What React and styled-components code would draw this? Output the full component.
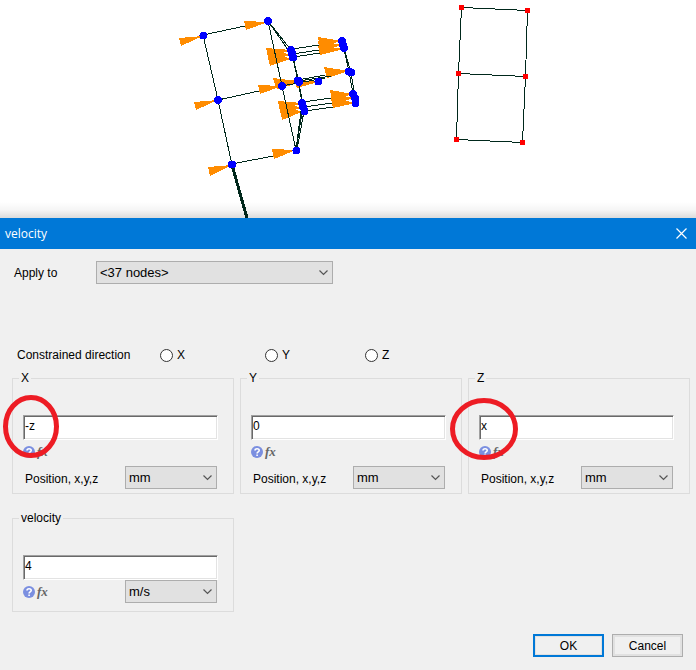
import React from "react";
import styled, { createGlobalStyle } from "styled-components";

const GlobalStyle = createGlobalStyle`
  * { box-sizing: border-box; }
  body {
    margin: 0;
    background: #f0f0f0;
    color: #000;
    font: 12px/14px "Liberation Sans", Arial, sans-serif;
  }
  input, select, button { font: inherit; color: inherit; }
`;

const Viewport = styled.section`
  position: relative;
  height: 218px;
  overflow: hidden;
  background: #fff;
  &::after {
    content: "";
    position: absolute;
    inset: auto 0 0;
    height: 16px;
    background: linear-gradient(rgba(0, 0, 0, 0), rgba(0, 0, 0, 0.04) 50%, rgba(0, 0, 0, 0.14));
  }
`;

const Scene = styled.svg`
  display: block;
  width: 100%;
  height: 100%;
`;

const TitleBar = styled.header`
  display: flex;
  align-items: center;
  justify-content: space-between;
  height: 31px;
  padding: 0 5px;
  background: #0078d7;
  color: #fff;
`;

const Title = styled.h1`
  margin: 0;
  font: 12px/16px "Open Sans", "Noto Sans", sans-serif;
`;

const CloseButton = styled.button`
  display: grid;
  place-items: center;
  width: 20px;
  height: 20px;
  padding: 0;
  border: 0;
  background: none;
`;

const Form = styled.form`
  padding: 12px 6px 13px 12px;
`;

const ApplyRow = styled.div`
  display: grid;
  grid-template-columns: 82px minmax(0, 237px);
  align-items: center;
  padding-left: 2px;
`;

const DirectionRow = styled.div`
  display: grid;
  grid-template-columns: 143px 105px 100px auto;
  align-items: center;
  height: 20px;
  margin: 61px 0 6px;
  padding-left: 5px;
`;

const RadioLabel = styled.label`
  display: flex;
  align-items: center;
  gap: 4px;
`;

const Radio = styled.input`
  appearance: none;
  width: 13px;
  height: 13px;
  margin: 0;
  border: 1px solid #333;
  border-radius: 50%;
  background: #fff;
  &:checked { box-shadow: inset 0 0 0 3px #fff; background: #333; }
`;

const Columns = styled.div`
  display: grid;
  grid-template-columns: repeat(3, minmax(0, 1fr));
  gap: 17px 6px;
`;

const Group = styled.fieldset`
  min-width: 0;
  margin: 0;
  padding: 0 15px ${(p) => (p.$compact ? 8 : 4)}px 10px;
  border: 1px solid #dcdcdc;
`;

const Legend = styled.legend`
  margin-left: -4px;
  padding: 0 2px;
`;

const Field = styled.div`
  position: relative;
  margin-top: 30px;
`;

const TextBox = styled.input`
  display: block;
  width: 100%;
  height: 25px;
  padding: 0 1px 3px;
  border: 1px solid;
  border-color: #a0a0a0 #fff #fff #a0a0a0;
  border-radius: 0;
  outline: 0;
  background: #fff;
  box-shadow: inset 1px 1px #696969, inset -1px -1px #e3e3e3;
`;

const Mark = styled.svg`
  position: absolute;
  z-index: 1;
  overflow: visible;
  pointer-events: none;
  left: ${(p) => p.$left}px;
  top: ${(p) => p.$top}px;
`;

const HelperRow = styled.div`
  display: flex;
  align-items: center;
  height: 24px;
  margin-bottom: 2px;
`;

const UnitRow = styled.div`
  display: grid;
  grid-template-columns: minmax(0, 1fr) 92px;
  align-items: center;
  padding-right: 1px;
`;

const UnitLabel = styled.label`
  padding: 2px 0 0 2px;
`;

const Helpers = styled.div`
  display: flex;
  align-items: center;
  gap: 2px;
`;

const IconButton = styled.button`
  display: block;
  padding: 0;
  border: 0;
  background: none;
`;

const FxButton = styled(IconButton)`
  color: #666;
  font: italic bold 13px/14px "Liberation Serif", "Times New Roman", serif;
`;

const SelectBox = styled.div`
  position: relative;
`;

const NativeSelect = styled.select`
  display: block;
  appearance: none;
  width: 100%;
  height: 23px;
  padding: 0 20px 0 3px;
  border: 1px solid #adadad;
  border-radius: 0;
  background: #e1e1e1;
  font-size: 13px;
`;

const Chevron = styled.svg`
  position: absolute;
  right: 5px;
  top: 9px;
  pointer-events: none;
`;

const Actions = styled.footer`
  display: flex;
  justify-content: flex-end;
  gap: 8px;
  margin-top: 22px;
  padding-right: 7px;
`;

const PushButton = styled.button`
  width: 71px;
  height: 23px;
  padding: 0;
  border: ${(p) => (p.$primary ? "2px solid #0078d7" : "1px solid #adadad")};
  background: #f0f0f0;
  box-shadow: inset 0 0 0 ${(p) => (p.$primary ? 1 : 2)}px #e1e1e1;
`;

function Select({ id, value, label }) {
  return (
    <SelectBox>
      <NativeSelect id={id} aria-label={label} defaultValue={value}>
        <option>{value}</option>
      </NativeSelect>
      <Chevron width="9" height="6" viewBox="0 0 9 6" fill="none" stroke="#555" strokeWidth="1.2">
        <path d="M.5 .5 4.5 4.5 8.5 .5" />
      </Chevron>
    </SelectBox>
  );
}

function HelpTools() {
  return (
    <Helpers>
      <IconButton type="button" aria-label="Help">
        <svg width="12" height="12" viewBox="0 0 12 12" display="block">
          <circle cx="6" cy="6" r="6" fill="#7b8fe0" />
          <path d="M4 4.6C4 2.2 8.2 2.2 8.2 4.4 8.2 5.9 6.1 5.8 6.1 7.4M6.1 8.4v1.5" fill="none" stroke="#fff" strokeWidth="1.6" />
        </svg>
      </IconButton>
      <FxButton type="button" aria-label="Function">fx</FxButton>
    </Helpers>
  );
}

function Circled({ left, top, width, height }) {
  return (
    <Mark $left={left} $top={top} width={width} height={height} aria-hidden="true">
      <ellipse cx={width / 2} cy={height / 2} rx={width / 2 - 2.5} ry={height / 2 - 2.5} fill="none" stroke="#ed1c24" strokeWidth="5" />
    </Mark>
  );
}

function AxisGroup({ axis, value, mark }) {
  const id = `unit-${axis}`;
  return (
    <Group>
      <Legend>{axis}</Legend>
      <Field>
        <TextBox aria-label={`${axis} component`} defaultValue={value} />
        {mark && <Circled {...mark} />}
      </Field>
      <HelperRow><HelpTools /></HelperRow>
      <UnitRow>
        <UnitLabel htmlFor={id}>Position, x,y,z</UnitLabel>
        <Select id={id} value="mm" />
      </UnitRow>
    </Group>
  );
}

const arrows = [
  "179,38 181,46 203,36", "244,21 246,30 268,22", "194,102 196,110 218,100",
  "258,85 260,94 282,86", "208,167 210,176 232,165", "272,149 274,159 296,150",
  "266,48 269,58 291,50", "267,52 269,62 292,54", "268,56 270,66 293,58",
  "318,37 320,47 342,41", "318,41 320,51 343,45", "318,45 320,55 344,49",
  "324,67 327,78 349,71", "273,78 276,88 298,81", "275,80 277,89 299,83", "294,79 297,88 318,82",
  "278,101 280,111 302,103", "279,105 281,115 303,107", "280,109 282,120 304,111",
  "330,90 332,100 353,94", "331,94 333,104 355,98", "331,98 333,108 356,103",
];

const edges = [
  "M203 35 218 100 232 165", "M268 21 282 86 296 150", "M203 35 245 26", "M218 100 259 91", "M232 164 273 156",
  "M268 21 291 50", "M268 21 293 57",
  "M291 50 298 81 303 107 296 150", "M293 57 299 83 304 111 297 150", "M302 103 296 150",
  "M342 41 349 71 353 94", "M344 48 351 73 356 103",
  "M293 49 319 45", "M293 54 319 50", "M294 57 320 53",
  "M282 86 325 78", "M298 80 325 75", "M299 81 331 76",
  "M303 102 331 98", "M304 107 332 103", "M305 111 333 107",
];

const nodes = [
  [203.5, 35.5], [268, 21], [218, 100], [232, 164.5], [296.5, 150.5], [282, 86], [318.5, 81.5],
  [298, 80.5], [299, 82], [291, 50], [292, 53.5], [293, 57.5], [342, 41], [343, 45], [344, 48],
  [349, 71.5], [351, 72.5], [302, 103], [303, 107], [304.5, 111], [353, 94], [355, 98], [355.5, 103],
];

const corners = [[461, 7], [527, 10], [458, 73], [525, 76], [456, 139], [522, 142]];

function MeshScene() {
  return (
    <Scene role="img" aria-label="Mesh with velocity arrows" shapeRendering="crispEdges">
      <g fill="#ff8c00">{arrows.map((p) => <polygon key={p} points={p} />)}</g>
      <g fill="none" stroke="#00281b">
        {edges.map((d) => <path key={d} d={d} />)}
        <path d="M232 165 247 218" strokeWidth="3" />
        <path d="M461.5 7.5 527.5 10.5 525.5 76.5 522.5 142.5 456.5 139.5 458.5 73.5ZM458.5 73.5 525.5 76.5" />
      </g>
      <g fill="#00f">{nodes.map(([x, y]) => <circle key={`${x},${y}`} cx={x} cy={y} r="4" />)}</g>
      <g fill="#f00">{corners.map(([x, y]) => <rect key={`${x},${y}`} x={x - 2} y={y - 2} width="5" height="5" />)}</g>
    </Scene>
  );
}

export default function App() {
  return (
    <>
      <GlobalStyle />
      <Viewport><MeshScene /></Viewport>
      <main>
        <TitleBar>
          <Title>velocity</Title>
          <CloseButton type="button" aria-label="Close">
            <svg width="11" height="11" viewBox="0 0 11 11" stroke="#fff" strokeWidth="1.2"><path d="M.5 .5l10 10M10.5 .5l-10 10" /></svg>
          </CloseButton>
        </TitleBar>
        <Form onSubmit={(e) => e.preventDefault()}>
          <ApplyRow>
            <label htmlFor="apply">Apply to</label>
            <Select id="apply" value="<37 nodes>" />
          </ApplyRow>
          <DirectionRow role="radiogroup" aria-labelledby="direction">
            <span id="direction">Constrained direction</span>
            {["X", "Y", "Z"].map((axis) => (
              <RadioLabel key={axis}><Radio type="radio" name="direction" value={axis} />{axis}</RadioLabel>
            ))}
          </DirectionRow>
          <Columns>
            <AxisGroup axis="X" value="-z" mark={{ left: -20, top: -20, width: 56, height: 63 }} />
            <AxisGroup axis="Y" value="0" />
            <AxisGroup axis="Z" value="x" mark={{ left: -29, top: -17, width: 68, height: 62 }} />
            <Group $compact>
              <Legend>velocity</Legend>
              <Field><TextBox aria-label="Velocity" defaultValue="4" /></Field>
              <UnitRow>
                <HelpTools />
                <Select label="Velocity unit" value="m/s" />
              </UnitRow>
            </Group>
          </Columns>
          <Actions>
            <PushButton type="submit" $primary>OK</PushButton>
            <PushButton type="button">Cancel</PushButton>
          </Actions>
        </Form>
      </main>
    </>
  );
}
